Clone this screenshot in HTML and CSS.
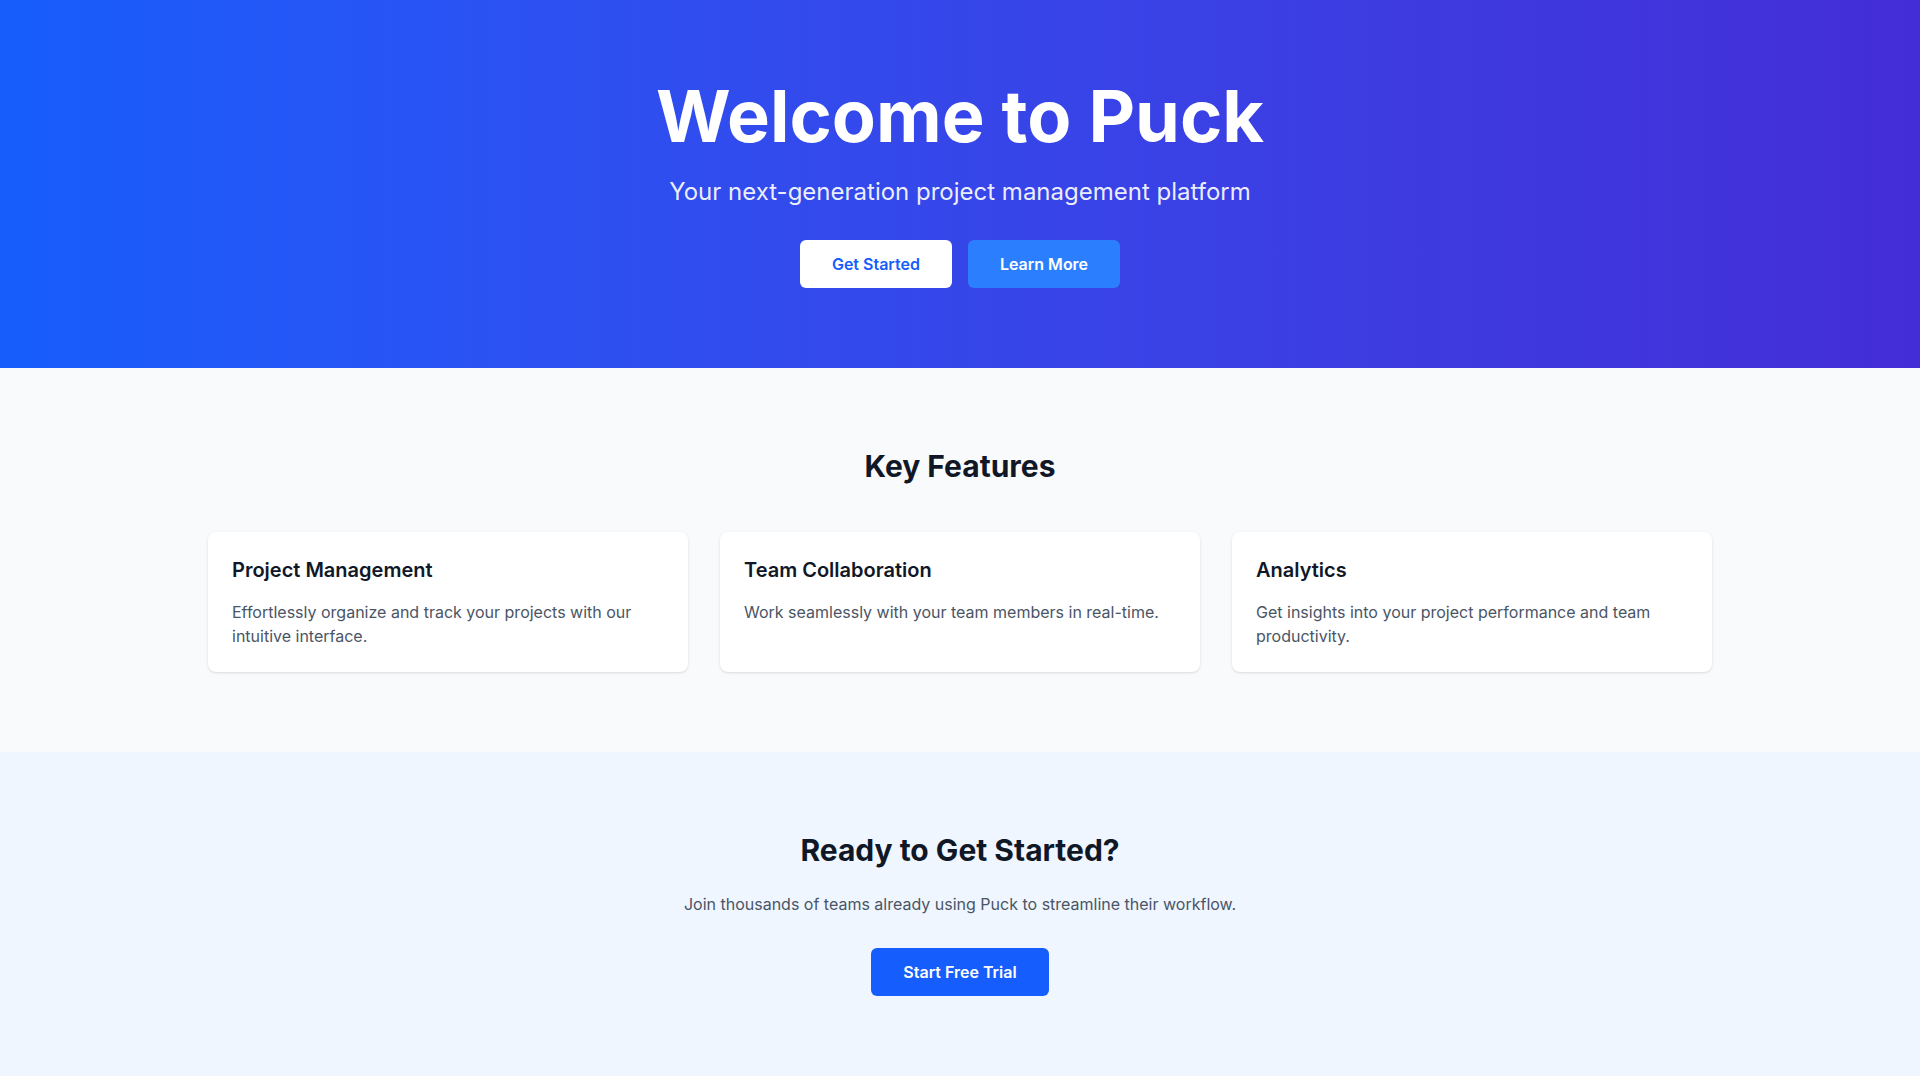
FILE: index.html
```html
<!DOCTYPE html>
<html lang="en">
<head>
<meta charset="utf-8">
<title>Welcome to Puck</title>
<link rel="stylesheet" href="styles.css">
</head>
<body>
  <section class="hero">
    <h1 class="hero-title">Welcome to Puck</h1>
    <p class="hero-subtitle">Your next-generation project management platform</p>
    <div class="hero-actions">
      <a class="btn btn-white" href="#">Get Started</a>
      <a class="btn btn-light" href="#">Learn More</a>
    </div>
  </section>

  <section class="features">
    <h2 class="section-title">Key Features</h2>
    <div class="feature-grid">
      <div class="card">
        <h3 class="card-title">Project Management</h3>
        <p class="card-text">Effortlessly organize and track your projects with our intuitive interface.</p>
      </div>
      <div class="card">
        <h3 class="card-title">Team Collaboration</h3>
        <p class="card-text">Work seamlessly with your team members in real-time.</p>
      </div>
      <div class="card">
        <h3 class="card-title">Analytics</h3>
        <p class="card-text">Get insights into your project performance and team productivity.</p>
      </div>
    </div>
  </section>

  <section class="cta">
    <h2 class="section-title">Ready to Get Started?</h2>
    <p class="cta-text">Join thousands of teams already using Puck to streamline their workflow.</p>
    <a class="btn btn-primary" href="#">Start Free Trial</a>
  </section>
</body>
</html>
```

FILE: styles.css
```css
* { box-sizing: border-box; }

html, body {
  margin: 0;
  padding: 0;
  background: #ffffff;
  font-family: Inter, "Noto Sans", "Liberation Sans", sans-serif;
  -webkit-font-smoothing: antialiased;
}

h1, h2, h3, p { margin: 0; }

.hero {
  background: linear-gradient(to right in oklab, #155dfc, #432dd7);
  padding: 80px 16px;
  text-align: center;
  color: #ffffff;
}

.hero-title {
  font-size: 72px;
  line-height: 72px;
  font-weight: 700;
  margin-bottom: 24px;
}

.hero-subtitle {
  font-size: 24px;
  line-height: 32px;
  font-weight: 400;
  color: rgba(255, 255, 255, 0.92);
  margin-bottom: 32px;
}

.hero-actions {
  display: flex;
  justify-content: center;
  gap: 16px;
}

.btn {
  display: inline-block;
  padding: 12px 32px;
  font-size: 16px;
  line-height: 24px;
  font-weight: 600;
  border-radius: 6px;
  text-decoration: none;
}

.btn-white {
  background: #ffffff;
  color: #155dfc;
}

.btn-light {
  background: #2b7fff;
  color: #ffffff;
}

.btn-primary {
  background: #155dfc;
  color: #ffffff;
}

.features {
  background: #f9fafb;
  padding: 80px 16px;
}

.section-title {
  font-size: 30px;
  line-height: 36px;
  font-weight: 700;
  color: #101828;
  text-align: center;
}

.features .section-title {
  margin-bottom: 48px;
}

.feature-grid {
  max-width: 1504px;
  margin: 0 auto;
  display: grid;
  grid-template-columns: repeat(3, 1fr);
  gap: 32px;
}

.card {
  background: #ffffff;
  border-radius: 8px;
  padding: 24px;
  box-shadow: 0 1px 3px 0 rgba(0, 0, 0, 0.1), 0 1px 2px -1px rgba(0, 0, 0, 0.1);
}

.card-title {
  font-size: 20px;
  line-height: 28px;
  font-weight: 600;
  color: #101828;
  margin-bottom: 16px;
}

.card-text {
  font-size: 16px;
  line-height: 24px;
  color: #4a5565;
}

.cta {
  background: #eff6ff;
  padding: 80px 16px;
  text-align: center;
}

.cta .section-title {
  margin-bottom: 24px;
}

.cta-text {
  font-size: 16px;
  line-height: 24px;
  color: #4a5565;
  margin-bottom: 32px;
}
```
